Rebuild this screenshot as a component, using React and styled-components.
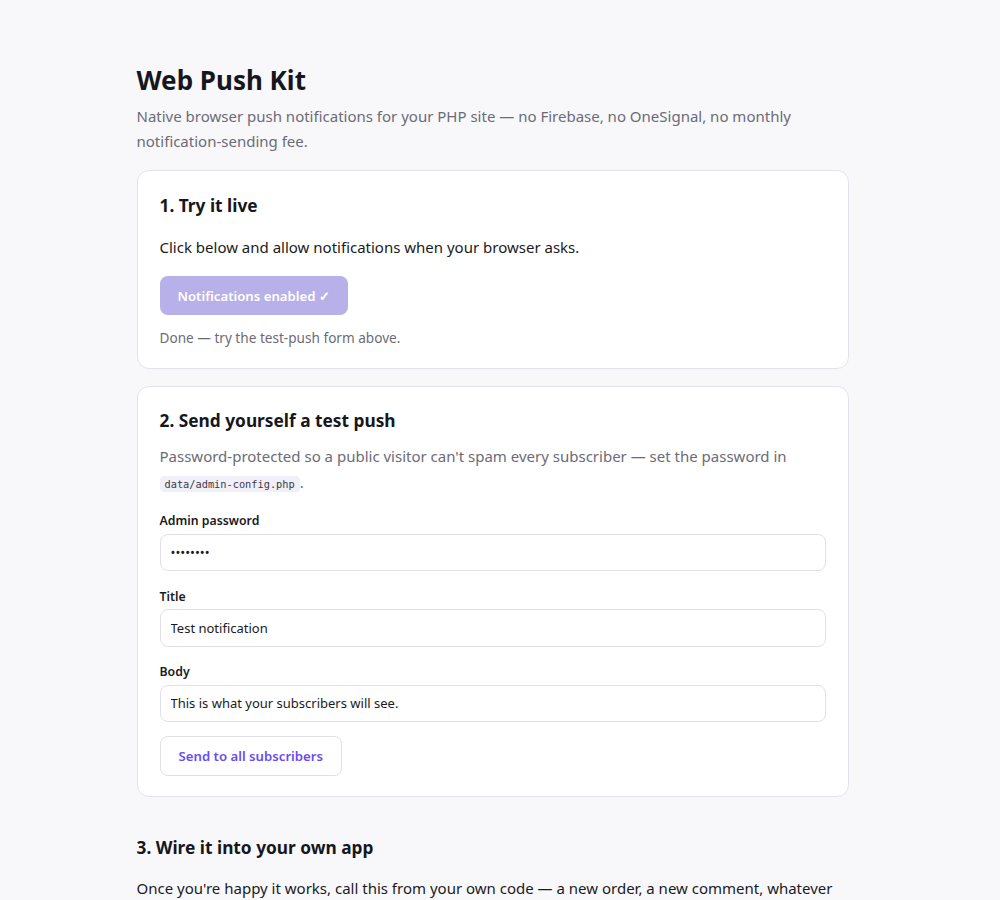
import React from "react";
import styled, { createGlobalStyle } from "styled-components";

const Global = createGlobalStyle`
  html { background: #f8f8fb; }
  body {
    margin: 0;
    padding-right: 15px;
    background: #f8f8fb;
    color: #1a1a24;
    font-family: "Noto Sans", "Segoe UI", sans-serif;
    font-size: 15px;
    line-height: 1.6;
  }
  * { box-sizing: border-box; }
`;

const Page = styled.main`
  max-width: 760px;
  margin: 0 auto;
  padding: 62px 24px 80px;
`;

const Title = styled.h1`
  margin: 0 0 6px;
  font-size: 26px;
  line-height: 36px;
  font-weight: 700;
  color: #16161d;
`;

const Lead = styled.p`
  margin: 0 0 16px;
  color: #6b6b78;
  font-size: 15px;
  line-height: 25px;
`;

const Card = styled.section`
  background: #ffffff;
  border: 1px solid #e3e3ec;
  border-radius: 12px;
  padding: ${(p) => p.$pt ?? 22}px 22px ${(p) => p.$pb ?? 20}px;
  margin-bottom: 17px;
`;

const Section = styled.section`
  padding-top: 21px;
`;

const H2 = styled.h2`
  margin: 0 0 ${(p) => p.$mb ?? 14}px;
  font-size: 17.3px;
  line-height: 25px;
  font-weight: 700;
  color: #16161d;
`;

const Text = styled.p`
  margin: ${(p) => p.$mt ?? 0}px 0 ${(p) => p.$mb ?? 16}px;
  color: ${(p) => (p.$muted ? "#6b6b78" : "#1a1a24")};
  font-size: ${(p) => p.$size ?? 15}px;
  line-height: ${(p) => p.$lh ?? 26}px;
`;

const Code = styled.code`
  font-family: "DejaVu Sans Mono", "Liberation Mono", monospace;
  font-size: 10.3px;
  line-height: 1;
  background: #f1f0f8;
  color: #3a3a48;
  border-radius: 4px;
  padding: 2px 5px;
`;

const Button = styled.button`
  display: inline-flex;
  align-items: center;
  height: ${(p) => (p.$outline ? 40 : 39)}px;
  padding: 0 ${(p) => (p.$outline ? 18 : 17)}px;
  border-radius: 8px;
  font-family: inherit;
  font-size: 13.2px;
  font-weight: 600;
  cursor: pointer;
  border: 1px solid ${(p) => (p.$outline ? "#e0dfea" : "transparent")};
  background: ${(p) => (p.$outline ? "#ffffff" : "#b8b0e8")};
  color: ${(p) => (p.$outline ? "#6a4cf0" : "#ffffff")};
`;

const Form = styled.div`
  display: flex;
  flex-direction: column;
`;

const Field = styled.label`
  display: flex;
  flex-direction: column;
  gap: 3.5px;
  margin-bottom: 16.5px;

  &:last-of-type {
    margin-bottom: 14px;
  }
`;

const LabelText = styled.span`
  font-size: 12.3px;
  font-weight: 600;
  line-height: 18px;
  color: #1a1a24;
`;

const Input = styled.input`
  height: 37.5px;
  width: 100%;
  padding: 0 10px;
  border: 1px solid #e0dfea;
  border-radius: 8px;
  background: #ffffff;
  color: #1a1a24;
  font-family: inherit;
  font-size: 13px;
  outline: none;
`;

const Actions = styled.div`
  display: flex;
`;

const Pre = styled.pre`
  margin: 0 0 16px;
  padding: 16px 18px;
  background: #1e1e2a;
  color: #e6e6f0;
  border-radius: 10px;
  font-family: "DejaVu Sans Mono", monospace;
  font-size: 12px;
  line-height: 1.6;
  overflow: auto;
`;

export default function App() {
  return (
    <>
      <Global />
      <Page>
        <Title>Web Push Kit</Title>
        <Lead>
          Native browser push notifications for your PHP site — no Firebase, no OneSignal, no monthly
          notification-sending fee.
        </Lead>

        <Card $pt={22} $pb={19}>
          <H2 $mb={16}>1. Try it live</H2>
          <Text>Click below and allow notifications when your browser asks.</Text>
          <Button disabled>Notifications enabled ✓</Button>
          <Text $muted $size={13.6} $lh={22} $mb={0} $mt={12}>
            Done — try the test-push form above.
          </Text>
        </Card>

        <Card $pt={21}>
          <H2 $mb={10}>2. Send yourself a test push</H2>
          <Text $muted $mb={17}>
            Password-protected so a public visitor can't spam every subscriber — set the password in{" "}
            <Code>data/admin-config.php</Code>.
          </Text>
          <Form>
            <Field>
              <LabelText>Admin password</LabelText>
              <Input type="password" defaultValue="password" />
            </Field>
            <Field>
              <LabelText>Title</LabelText>
              <Input type="text" defaultValue="Test notification" />
            </Field>
            <Field>
              <LabelText>Body</LabelText>
              <Input type="text" defaultValue="This is what your subscribers will see." />
            </Field>
            <Actions>
              <Button $outline>Send to all subscribers</Button>
            </Actions>
          </Form>
        </Card>

        <Section>
          <H2 $mb={15}>3. Wire it into your own app</H2>
          <Text>
            Once you're happy it works, call this from your own code — a new order, a new comment, whatever
            deserves a nudge:
          </Text>
          <Pre>{`require __DIR__ . '/web-push-kit/src/WebPushKit.php';

$push = new WebPushKit(__DIR__ . '/web-push-kit/data');
$push->sendToAll([
    'title' => 'New order #1042',
    'body'  => 'Someone just bought the Pro plan.',
    'url'   => '/admin/orders/1042',
]);`}</Pre>
          <Text $muted>
            Subscriptions that the browser reports as expired are cleaned up automatically on the next send.
          </Text>
          <H2>4. Going live</H2>
          <Text $muted>
            Serve the site over HTTPS, keep the VAPID keys in data/ private, and change the admin password
            before you share the link with anyone.
          </Text>
        </Section>
      </Page>
    </>
  );
}
